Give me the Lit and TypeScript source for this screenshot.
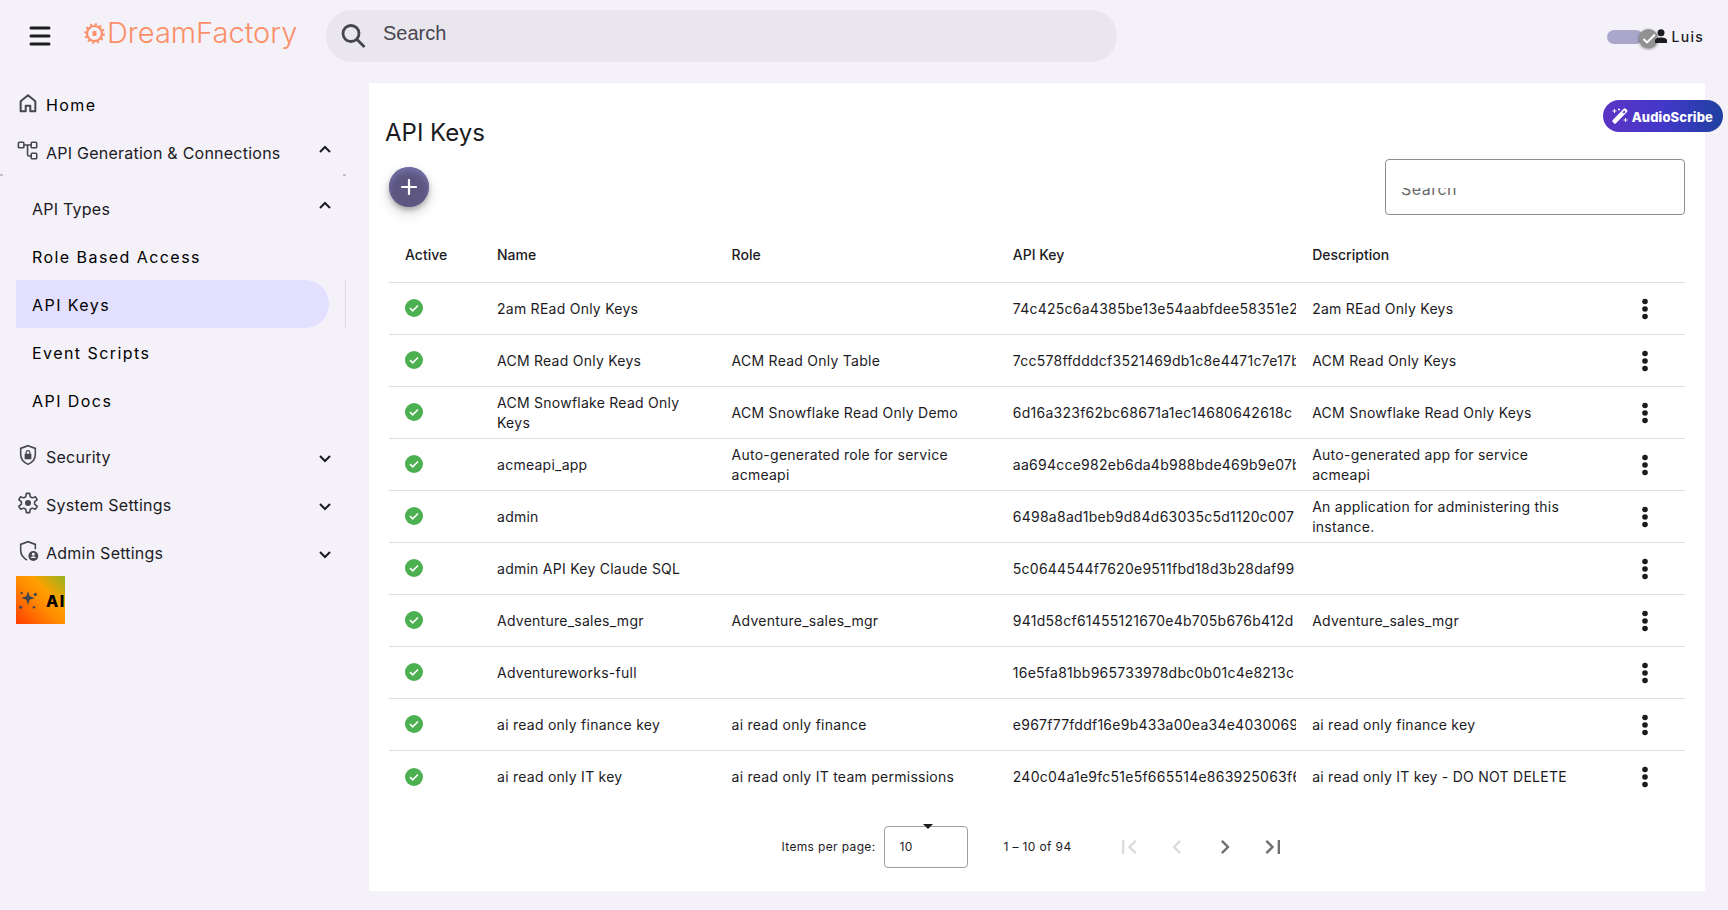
import { LitElement, html, css, svg, nothing } from "lit";
import { customElement, state } from "lit/decorators.js";

interface ApiKey {
  name: string;
  role: string;
  key: string;
  description: string;
}

const KEYS: ApiKey[] = [
  { name: "2am REad Only Keys", role: "", key: "74c425c6a4385be13e54aabfdee58351e2", description: "2am REad Only Keys" },
  { name: "ACM Read Only Keys", role: "ACM Read Only Table", key: "7cc578ffdddcf3521469db1c8e4471c7e17b", description: "ACM Read Only Keys" },
  { name: "ACM Snowflake Read Only Keys", role: "ACM Snowflake Read Only Demo", key: "6d16a323f62bc68671a1ec14680642618c", description: "ACM Snowflake Read Only Keys" },
  { name: "acmeapi_app", role: "Auto-generated role for service acmeapi", key: "aa694cce982eb6da4b988bde469b9e07b", description: "Auto-generated app for service acmeapi" },
  { name: "admin", role: "", key: "6498a8ad1beb9d84d63035c5d1120c007", description: "An application for administering this instance." },
  { name: "admin API Key Claude SQL", role: "", key: "5c0644544f7620e9511fbd18d3b28daf99", description: "" },
  { name: "Adventure_sales_mgr", role: "Adventure_sales_mgr", key: "941d58cf61455121670e4b705b676b412d", description: "Adventure_sales_mgr" },
  { name: "Adventureworks-full", role: "", key: "16e5fa81bb965733978dbc0b01c4e8213c", description: "" },
  { name: "ai read only finance key", role: "ai read only finance", key: "e967f77fddf16e9b433a00ea34e4030069", description: "ai read only finance key" },
  { name: "ai read only IT key", role: "ai read only IT team permissions", key: "240c04a1e9fc51e5f665514e863925063f6", description: "ai read only IT key - DO NOT DELETE" },
];

const home = svg`<path d="M4 10V21h5.500v-6h5v6H20V10l-8-6.500z" fill="none" stroke="currentColor" stroke-width="2.200" stroke-linejoin="round"/>`;
const nodes = svg`<g fill="none" stroke="currentColor" stroke-width="1.700"><rect x="1.500" y="2.500" width="6" height="6" rx="1"/><rect x="15.500" y="2.500" width="6" height="6" rx="1"/><rect x="15.500" y="14.500" width="6" height="6" rx="1"/><path d="M7.500 5.500h8M11.500 5.500v10.500q0 1.500 1.500 1.500h2.500"/></g>`;
const shieldLock = svg`<path d="M12 1.800l8 3v6.500c0 5-3.300 9-8 10.900-4.700-1.900-8-5.900-8-10.900V4.800z" fill="none" stroke="currentColor" stroke-width="1.700"/><path d="M8.300 10.500h1V9.300a2.700 2.700 0 0 1 5.400 0v1.200h1v6H8.300zm2.300 0h2.800V9.300a1.400 1.400 0 0 0-2.800 0z" fill="currentColor" fill-rule="evenodd"/>`;
const gear = svg`<path d="M10.200 1.500h3.600l.7 3.700 2.100 1.200 3.600-1.200 1.800 3.100L19.200 10.800v2.400l2.800 2.500-1.800 3.100-3.600-1.200-2.100 1.200-.7 3.700h-3.600l-.7-3.700-2.100-1.200-3.600 1.200L2 15.700l2.800-2.500v-2.400L2 8.300l1.800-3.100 3.600 1.200 2.100-1.200z" fill="none" stroke="currentColor" stroke-width="1.700" stroke-linejoin="round"/><circle cx="12" cy="12" r="3.300" fill="currentColor"/>`;
const adminShield = svg`<path d="M20 10V4.800l-8-3-8 3v6.500c0 4.700 2.900 8.500 7 10.500" fill="none" stroke="currentColor" stroke-width="1.700"/><circle cx="17.800" cy="17.500" r="5.400" fill="currentColor"/><circle cx="17.800" cy="15.600" r="1.600" fill="#f4f1f9"/><path d="M14.600 19.600a3.800 3.800 0 0 1 6.400 0z" fill="#f4f1f9"/>`;
const sparkle = svg`<g fill="currentColor"><path d="M12 3.500l1.900 5.600 5.600 1.900-5.600 1.900L12 18.500l-1.900-5.600L4.500 11l5.600-1.900z"/><circle cx="5" cy="5.500" r="1.300"/><circle cx="20" cy="7" r="1.700"/><circle cx="4" cy="21" r="1.700"/><circle cx="18.500" cy="21" r="1.300"/></g>`;

const icon = (body: unknown, cls = "icon") =>
  html`<svg class=${cls} viewBox="0 0 24 24" aria-hidden="true">${body}</svg>`;

const arrow = (open: boolean) =>
  html`<svg class="arrow" viewBox="0 0 12 8" aria-hidden="true"><path d=${open ? "M1 7l5-5 5 5" : "M1 1l5 5 5-5"} fill="none" stroke="currentColor" stroke-width="2"/></svg>`;

@customElement("df-topbar")
class DfTopbar extends LitElement {
  static styles = css`
    :host {
      display: flex;
      align-items: center;
      height: 72px;
      padding: 0 24px;
      box-sizing: border-box;
      color: #1c1b1f;
    }
    button {
      border: 0;
      background: none;
      padding: 0;
      font: inherit;
      color: inherit;
      cursor: pointer;
    }
    .menu { display: flex; width: 32px; height: 32px; align-items: center; justify-content: center; }
    .menu svg { width: 22px; height: 20px; }
    .logo {
      display: flex;
      align-items: center;
      margin-left: 28px;
      width: 218px;
      gap: 2px;
      padding-bottom: 6px;
      color: #fa8f68;
      font: 300 29px/40px Inter, sans-serif;
      text-decoration: none;
    }
    .logo svg { width: 21px; height: 21px; flex: none; }
    .search {
      display: flex;
      align-items: center;
      width: 791px;
      height: 52px;
      margin-left: 24px;
      padding: 0 15px;
      box-sizing: border-box;
      border-radius: 26px;
      background: #e9e6ee;
      gap: 17px;
    }
    .search svg { width: 25px; height: 25px; flex: none; color: #47454e; }
    .search input {
      flex: 1;
      min-width: 0;
      border: 0;
      outline: 0;
      padding: 0 0 7px;
      background: none;
      font: 20px/24px "Liberation Sans", Arial, sans-serif;
      color: #47454e;
    }
    .search input::placeholder { color: #47454e; opacity: 1; }
    .account { display: flex; align-items: center; margin-left: auto; padding-top: 2px; }
    .toggle {
      position: relative;
      width: 36px;
      height: 14px;
      border-radius: 7px;
      background: #aaa7cb;
    }
    .thumb {
      position: absolute;
      top: -1px;
      right: -15px;
      width: 19px;
      height: 19px;
      border-radius: 50%;
      background: #919191;
      box-shadow: 0 1px 3px rgba(0, 0, 0, 0.5);
    }
    .thumb svg { display: block; width: 19px; height: 19px; }
    .user {
      display: flex;
      align-items: center;
      gap: 5px;
      margin-left: 12px;
      font: 500 14px/20px Inter, sans-serif;
      letter-spacing: 0.09em;
      position: relative;
    }
    .user svg { width: 12px; height: 15px; margin-bottom: 2px; }
  `;

  render() {
    return html`
      <button class="menu" aria-label="Toggle navigation">
        <svg viewBox="0 0 22 20"><path d="M2 2h18M2 10h18M2 18h18" stroke="currentColor" stroke-width="3" stroke-linecap="round"/></svg>
      </button>
      <a class="logo" href="#" aria-label="DreamFactory">
        <svg viewBox="0 0 21 21" fill="none" stroke="currentColor">
          <circle cx="10.500" cy="10.500" r="7.500" stroke-width="2.200"/>
          <circle cx="10.500" cy="10.500" r="9.300" stroke-width="2" stroke-dasharray="2.200 2.670"/>
          <rect x="8.500" y="8" width="4" height="5" rx="1" fill="currentColor" stroke="none"/>
        </svg>
        <span>DreamFactory</span>
      </a>
      <label class="search">
        <svg viewBox="0 0 25 25" fill="none" stroke="currentColor" stroke-width="2.800"><circle cx="10" cy="9.500" r="8"/><path d="M16 15.500l7.500 7.500"/></svg>
        <input type="text" placeholder="Search" aria-label="Search" />
      </label>
      <div class="account">
        <button class="toggle" role="switch" aria-checked="true" aria-label="Dark mode">
          <span class="thumb"><svg viewBox="0 0 19 19"><path d="M4.500 10l3.500 3.500L16 5.500" fill="none" stroke="#fff" stroke-width="1.900"/></svg></span>
        </button>
        <button class="user">
          <svg viewBox="0 0 12 15" fill="currentColor"><circle cx="6" cy="3.700" r="3.500"/><path d="M0 14v-2.500C0 9.500 2.500 8.500 6 8.500s6 1 6 3V14z"/></svg>
          Luis
        </button>
      </div>
    `;
  }
}

@customElement("df-sidebar")
class DfSidebar extends LitElement {
  static styles = css`
    :host {
      display: block;
      box-sizing: border-box;
      padding: 8px 14px 0 16px;
      color: #1c1b1f;
      font: 16px/24px Inter, sans-serif;
    }
    .row {
      display: flex;
      align-items: center;
      width: 100%;
      height: 48px;
      box-sizing: border-box;
      border: 0;
      padding: 2px 0 0 1px;
      background: none;
      color: inherit;
      font: inherit;
      letter-spacing: 0.015em;
      text-align: left;
      text-decoration: none;
      cursor: pointer;
    }
    .link { color: #000; letter-spacing: 0.09em; }
    .sub { padding-left: 16px; }
    .label { flex: 1; white-space: nowrap; }
    .icon { width: 22px; height: 22px; margin: 0 7px 4px 0; flex: none; color: #47454e; }
    .arrow { width: 12px; height: 8px; margin-bottom: 8px; }
    .closed .arrow { margin: 4px 0 0; }
    .group { position: relative; padding: 8px 0; }
    .group::before, .group::after {
      content: "";
      position: absolute;
      top: -2px;
      width: 3px;
      height: 2px;
      background: #c3c0c8;
    }
    .group::before { left: -16px; }
    .group::after { right: -15px; }
    .active {
      position: relative;
      width: 313px;
      background: #e2dfff;
      border-radius: 0 24px 24px 0;
    }
    .active::after {
      content: "";
      position: absolute;
      top: 0;
      right: -17px;
      width: 1px;
      height: 48px;
      background: #dedbe3;
    }
    .ai {
      width: 49px;
      background: linear-gradient(45deg, #ff3d00 0%, #ff8a00 45%, #ffa000 65%, #76b82a 110%);
      font-weight: 800;
      overflow: hidden;
    }
    nav { width: 315px; }
  `;

  render() {
    return html`
      <nav>
        <a class="row link" href="#">${icon(home)}<span class="label">Home</span></a>
        <button class="row" aria-expanded="true">${icon(nodes)}<span class="label">API Generation &amp; Connections</span>${arrow(true)}</button>
        <div class="group">
          <button class="row sub" aria-expanded="true"><span class="label">API Types</span>${arrow(true)}</button>
          <a class="row link sub" href="#">Role Based Access</a>
          <a class="row link sub active" href="#" aria-current="page">API Keys</a>
          <a class="row link sub" href="#">Event Scripts</a>
          <a class="row link sub" href="#">API Docs</a>
        </div>
        <button class="row closed" aria-expanded="false">${icon(shieldLock)}<span class="label">Security</span>${arrow(false)}</button>
        <button class="row closed" aria-expanded="false">${icon(gear)}<span class="label">System Settings</span>${arrow(false)}</button>
        <button class="row closed" aria-expanded="false">${icon(adminShield)}<span class="label">Admin Settings</span>${arrow(false)}</button>
        <a class="row link ai" href="#">${icon(sparkle)}<span class="label">AI</span></a>
      </nav>
    `;
  }
}

@customElement("df-key-table")
class DfKeyTable extends LitElement {
  static styles = css`
    :host { display: block; }
    table {
      width: 100%;
      table-layout: fixed;
      border-collapse: separate;
      border-spacing: 0;
      color: #1c1b1f;
      font: 14px/20px Inter, sans-serif;
    }
    th, td {
      padding: 0 16px;
      text-align: left;
      border-bottom: 1px solid #dedede;
      box-sizing: border-box;
    }
    th { height: 56px; font-weight: 500; }
    td { height: 52px; letter-spacing: 0.018em; }
    tbody tr:last-child td { border-bottom: 0; }
    .c-active { width: 7.1%; }
    .c-name { width: 18.1%; }
    .c-role { width: 21.7%; }
    .c-key { width: 23.1%; }
    .c-desc { width: 22.9%; }
    .key { padding-right: 0; overflow: hidden; white-space: nowrap; }
    .ok { display: block; width: 18px; height: 18px; margin-bottom: 1px; }
    .more {
      display: flex;
      align-items: center;
      justify-content: center;
      width: 48px;
      height: 48px;
      margin-left: 28px;
      border: 0;
      padding: 0;
      background: none;
      cursor: pointer;
    }
    .act { padding: 0; }
    .more svg { width: 6px; height: 22px; }
  `;

  render() {
    return html`
      <table>
        <colgroup>
          <col class="c-active" /><col class="c-name" /><col class="c-role" /><col class="c-key" /><col class="c-desc" /><col />
        </colgroup>
        <thead>
          <tr>
            <th scope="col">Active</th><th scope="col">Name</th><th scope="col">Role</th>
            <th scope="col">API Key</th><th scope="col">Description</th><th></th>
          </tr>
        </thead>
        <tbody>
          ${KEYS.map(
            (k) => html`<tr>
              <td>
                <svg class="ok" viewBox="0 0 18 18" role="img" aria-label="Active">
                  <circle cx="9" cy="9" r="9" fill="#4caf50" />
                  <path d="M5 9.200l2.700 2.600L13 6.500" fill="none" stroke="#fff" stroke-width="1.600" />
                </svg>
              </td>
              <td>${k.name}</td>
              <td>${k.role || nothing}</td>
              <td class="key">${k.key}</td>
              <td>${k.description || nothing}</td>
              <td class="act">
                <button class="more" aria-label="Actions">
                  <svg viewBox="0 0 6 22" fill="#1c1b1f"><circle cx="3" cy="3.500" r="2.800"/><circle cx="3" cy="11" r="2.800"/><circle cx="3" cy="18.500" r="2.800"/></svg>
                </button>
              </td>
            </tr>`
          )}
        </tbody>
      </table>
    `;
  }
}

@customElement("df-paginator")
class DfPaginator extends LitElement {
  static styles = css`
    :host {
      display: flex;
      align-items: center;
      justify-content: center;
      padding-left: 4px;
      font: 12px/20px Inter, sans-serif;
      letter-spacing: 0.03em;
      color: #1c1b1f;
    }
    .size { display: flex; align-items: center; gap: 8px; }
    .box { position: relative; display: block; width: 84px; height: 42px; }
    select {
      appearance: none;
      width: 100%;
      height: 100%;
      box-sizing: border-box;
      padding: 0 15px;
      border: 1px solid #9e9e9e;
      border-radius: 4px;
      background: none;
      font: 12px/20px Inter, sans-serif;
      letter-spacing: 0.03em;
      color: inherit;
    }
    .caret { position: absolute; top: -2px; left: 39px; width: 10px; height: 5px; }
    .range { margin: 0 33px 0 36px; }
    .nav { display: flex; }
    .nav button {
      display: flex;
      align-items: center;
      justify-content: center;
      width: 48px;
      height: 48px;
      padding: 0;
      border: 0;
      background: none;
      color: #6f6f6f;
    }
    .nav button:disabled { color: #dcdcdc; }
    .nav svg { width: 28px; height: 28px; }
  `;

  private button(label: string, d: string, disabled = false) {
    return html`<button aria-label=${label} ?disabled=${disabled}>
      <svg viewBox="0 0 24 24" fill="currentColor"><path d=${d} /></svg>
    </button>`;
  }

  render() {
    return html`
      <label class="size">
        <span>Items per page:</span>
        <span class="box">
          <select><option>10</option><option>50</option><option>100</option></select>
          <svg class="caret" viewBox="0 0 10 5"><path d="M0 0h10L5 5z" fill="#1c1b1f"/></svg>
        </span>
      </label>
      <span class="range">1 – 10 of 94</span>
      <div class="nav">
        ${this.button("First page", "M18.41 16.59L13.82 12l4.590-4.590L17 6l-6 6 6 6zM6 6h2v12H6z", true)}
        ${this.button("Previous page", "M15.410 7.410L14 6l-6 6 6 6 1.410-1.410L10.830 12z", true)}
        ${this.button("Next page", "M10 6L8.590 7.410 13.170 12l-4.580 4.590L10 18l6-6z")}
        ${this.button("Last page", "M5.590 7.410L10.180 12l-4.590 4.590L7 18l6-6-6-6zM16 6h2v12h-2z")}
      </div>
    `;
  }
}

@customElement("app-root")
class AppRoot extends LitElement {
  static styles = css`
    :host {
      display: block;
      position: relative;
      min-height: 100vh;
      background: #f4f1f9;
      font-family: Inter, sans-serif;
      color: #1c1b1f;
    }
    .body { display: grid; grid-template-columns: 345px minmax(0, 1fr); }
    .main { padding: 11px 23px 19px 24px; }
    .card { background: #fff; padding: 32px 20px 20px; }
    h1 { margin: 0 -4px; font: 400 24px/36px Inter, sans-serif; }
    .tools { display: flex; align-items: center; justify-content: space-between; margin-top: 8px; }
    .add {
      width: 40px;
      height: 40px;
      display: flex;
      align-items: center;
      justify-content: center;
      padding: 0;
      border: 0;
      border-radius: 50%;
      background: #5c5680;
      box-shadow: inset 0 4px 6px #7571a9, 0 3px 5px rgba(0, 0, 0, 0.25), 0 6px 14px rgba(0, 0, 0, 0.16);
    }
    .add svg { width: 16px; height: 16px; }
    .filter {
      display: flex;
      align-items: flex-end;
      width: 300px;
      height: 56px;
      padding: 0 15px 13px;
      box-sizing: border-box;
      border: 1px solid #8e8e8e;
      border-radius: 4px;
    }
    .infix {
      display: flex;
      align-items: flex-end;
      width: 100%;
      height: 13px;
      overflow: hidden;
    }
    .filter input {
      flex: 1;
      min-width: 0;
      height: 24px;
      padding: 0;
      border: 0;
      outline: 0;
      background: none;
      font: 16px/24px Inter, sans-serif;
      letter-spacing: 0.03em;
    }
    .filter input::placeholder { color: #6b6b6b; opacity: 1; }
    .table { display: block; margin-top: 12px; }
    .pager { margin-top: 20px; }
    .scribe {
      position: absolute;
      top: 100px;
      right: 5px;
      display: flex;
      align-items: center;
      gap: 4px;
      height: 32px;
      padding: 2px 10px 0 9px;
      border: 0;
      border-radius: 16px;
      color: #fff;
      background: linear-gradient(90deg, #5b34c4, #4338ca 50%, #1e40a0);
      font: 800 13px/20px Inter, sans-serif;
      letter-spacing: 0.01em;
    }
    .scribe svg { width: 16px; height: 16px; margin-bottom: 2px; }
  `;

  @state() private filter = "";

  render() {
    return html`
      <df-topbar></df-topbar>
      <div class="body">
        <df-sidebar></df-sidebar>
        <main class="main">
          <section class="card">
            <h1>API Keys</h1>
            <div class="tools">
              <button class="add" aria-label="Create API key">
                <svg viewBox="0 0 16 16"><path d="M8 1v14M1 8h14" stroke="#fff" stroke-width="2.200" stroke-linecap="round"/></svg>
              </button>
              <label class="filter">
                <span class="infix">
                  <input type="text" placeholder="Search" aria-label="Search API keys" .value=${this.filter} />
                </span>
              </label>
            </div>
            <df-key-table class="table"></df-key-table>
            <df-paginator class="pager"></df-paginator>
          </section>
        </main>
      </div>
      <button class="scribe">
        <svg viewBox="0 0 16 16" fill="#fff"><path d="M11.700.8a1.500 1.500 0 0 1 2.100 0l1.200 1.200a1.500 1.500 0 0 1 0 2.100L4 15.200a1.500 1.500 0 0 1-2.100 0L.8 14a1.500 1.500 0 0 1 0-2.100zM10.500 4.200l1.400 1.400 1.700-1.700-1.400-1.400z" fill-rule="evenodd"/><path d="M2.500 1v4M.5 3h4M13.500 10v4M11.500 12h4M7 .5v2M6 1.500h2" stroke="#fff"/></svg>
        AudioScribe
      </button>
    `;
  }
}
